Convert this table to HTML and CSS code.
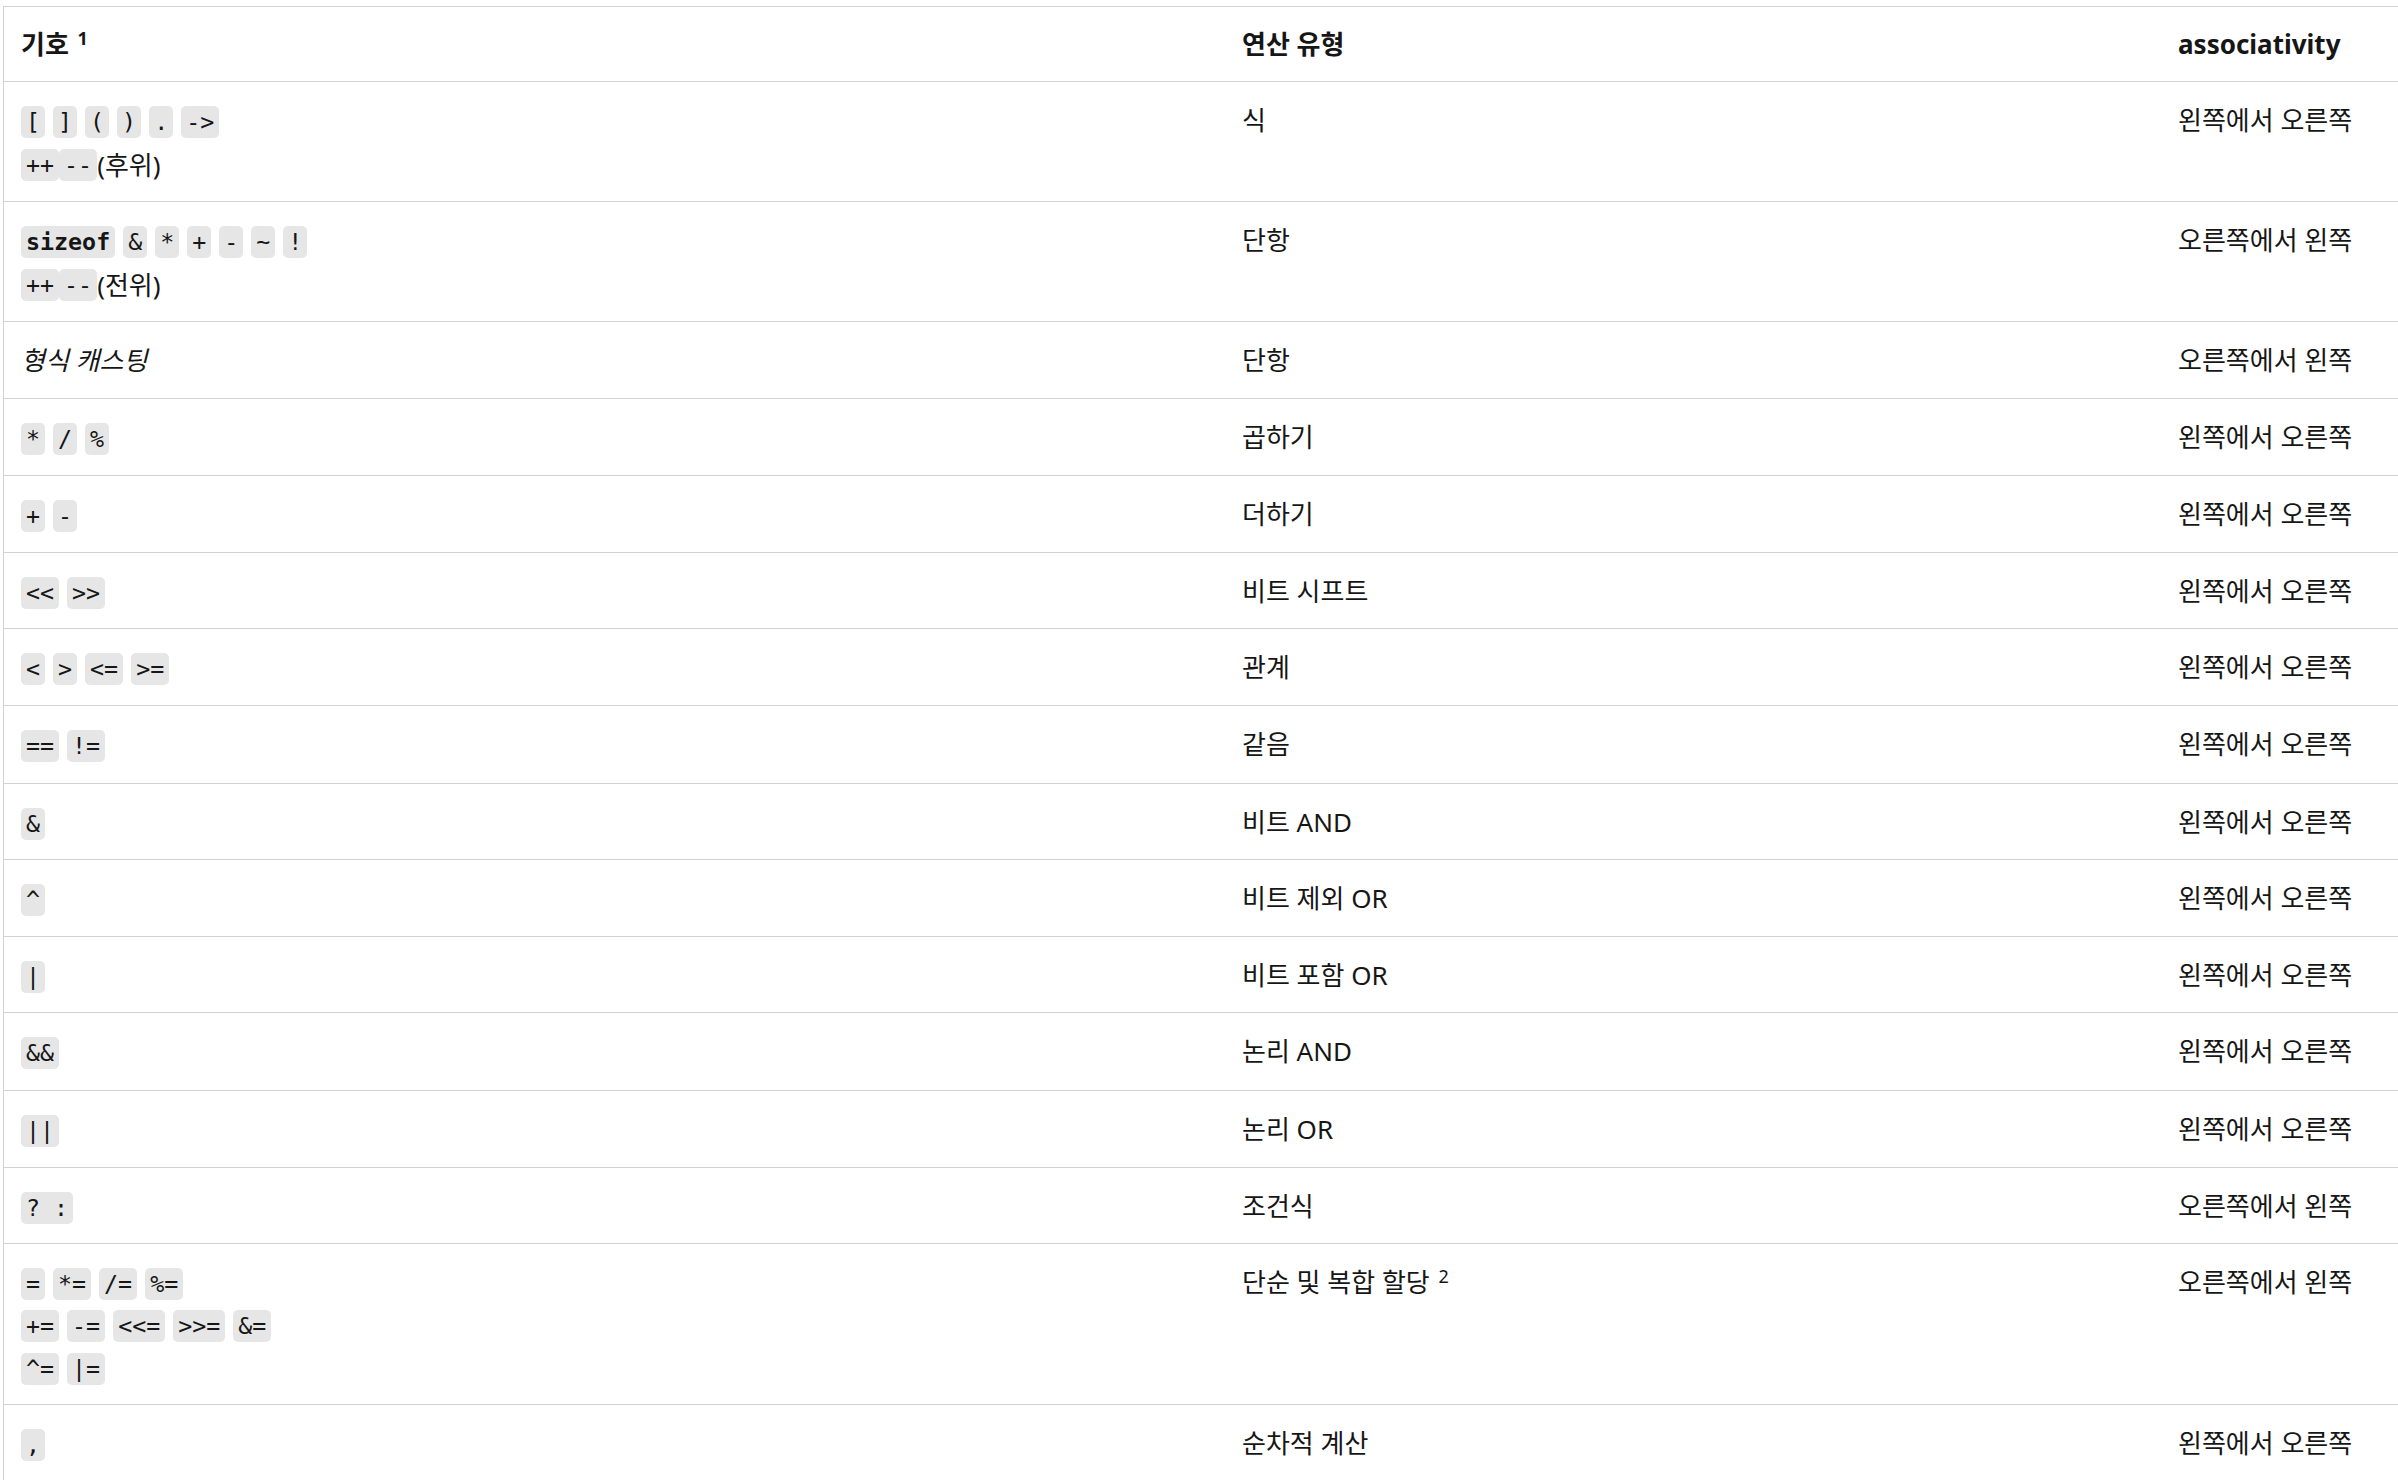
FILE: index.html
```html
<!DOCTYPE html>
<html lang="ko">
<head>
<meta charset="utf-8">
<title>C 연산자 우선 순위</title>
<link rel="stylesheet" href="styles.css">
</head>
<body>
<table class="ops">
  <colgroup><col class="c1"><col class="c2"><col class="c3"></colgroup>
  <thead>
    <tr><th class="first">기호 <sup>1</sup></th><th>연산 유형</th><th>associativity</th></tr>
  </thead>
  <tbody>
    <tr>
      <td class="first">
        <div class="ln"><code>[</code><code>]</code><code>(</code><code>)</code><code>.</code><code>-&gt;</code></div>
        <div class="ln tight"><code>++</code><code>--</code><span class="txt">(후위)</span></div>
      </td>
      <td>식</td><td>왼쪽에서 오른쪽</td>
    </tr>
    <tr>
      <td class="first">
        <div class="ln"><code class="b">sizeof</code><code>&amp;</code><code>*</code><code>+</code><code>-</code><code>~</code><code>!</code></div>
        <div class="ln tight"><code>++</code><code>--</code><span class="txt">(전위)</span></div>
      </td>
      <td>단항</td><td>오른쪽에서 왼쪽</td>
    </tr>
    <tr><td class="first"><em>형식 캐스팅</em></td><td>단항</td><td>오른쪽에서 왼쪽</td></tr>
    <tr><td class="first"><div class="ln"><code>*</code><code>/</code><code>%</code></div></td><td>곱하기</td><td>왼쪽에서 오른쪽</td></tr>
    <tr><td class="first"><div class="ln"><code>+</code><code>-</code></div></td><td>더하기</td><td>왼쪽에서 오른쪽</td></tr>
    <tr><td class="first"><div class="ln"><code>&lt;&lt;</code><code>&gt;&gt;</code></div></td><td>비트 시프트</td><td>왼쪽에서 오른쪽</td></tr>
    <tr><td class="first"><div class="ln"><code>&lt;</code><code>&gt;</code><code>&lt;=</code><code>&gt;=</code></div></td><td>관계</td><td>왼쪽에서 오른쪽</td></tr>
    <tr><td class="first"><div class="ln"><code>==</code><code>!=</code></div></td><td>같음</td><td>왼쪽에서 오른쪽</td></tr>
    <tr><td class="first"><div class="ln"><code>&amp;</code></div></td><td>비트 AND</td><td>왼쪽에서 오른쪽</td></tr>
    <tr><td class="first"><div class="ln"><code>^</code></div></td><td>비트 제외 OR</td><td>왼쪽에서 오른쪽</td></tr>
    <tr><td class="first"><div class="ln"><code>|</code></div></td><td>비트 포함 OR</td><td>왼쪽에서 오른쪽</td></tr>
    <tr><td class="first"><div class="ln"><code>&amp;&amp;</code></div></td><td>논리 AND</td><td>왼쪽에서 오른쪽</td></tr>
    <tr><td class="first"><div class="ln"><code>||</code></div></td><td>논리 OR</td><td>왼쪽에서 오른쪽</td></tr>
    <tr><td class="first"><div class="ln"><code>? :</code></div></td><td>조건식</td><td>오른쪽에서 왼쪽</td></tr>
    <tr>
      <td class="first">
        <div class="ln"><code>=</code><code>*=</code><code>/=</code><code>%=</code></div>
        <div class="ln"><code>+=</code><code>-=</code><code>&lt;&lt;=</code><code>&gt;&gt;=</code><code>&amp;=</code></div>
        <div class="ln"><code>^=</code><code>|=</code></div>
      </td>
      <td>단순 및 복합 할당 <sup>2</sup></td><td>오른쪽에서 왼쪽</td>
    </tr>
    <tr><td class="first"><div class="ln"><code>,</code></div></td><td>순차적 계산</td><td>왼쪽에서 오른쪽</td></tr>
  </tbody>
</table>
</body>
</html>
```

FILE: styles.css
```css
html, body {
  margin: 0;
  padding: 0;
  overflow: hidden;
  background: #ffffff;
}

body {
  font-family: "Noto Sans", "Noto Sans CJK KR", sans-serif;
  font-size: 26px;
  line-height: 36px;
  color: #161616;
}

.ops {
  margin: 6px 0 0 3px;
  width: 2395px;
  table-layout: fixed;
  border-collapse: separate;
  border-spacing: 0;
}

.c1 { width: 1222px; }
.c2 { width: 936px; }
.c3 { width: 237px; }

.ops th,
.ops td {
  text-align: left;
  vertical-align: top;
  padding: 20px 17px 19.6px 17px;
  border-bottom: 1.5px solid #d2d2d2;
}

.ops tbody tr:nth-child(4n) td {
  padding-bottom: 20.6px;
}

.ops th {
  font-weight: 700;
  padding-top: 19px;
  padding-bottom: 19px;
  border-top: 1.5px solid #d2d2d2;
}

.ops .first {
  border-left: 1.5px solid #d2d2d2;
}

.ops sup {
  font-size: 18px;
  line-height: 0;
  vertical-align: 9px;
  margin-left: 2px;
}

.ops em {
  font-style: italic;
}

.ln {
  display: flex;
  align-items: flex-start;
  gap: 8px;
  height: 36px;
}

.ln + .ln {
  margin-top: 6.4px;
}

.ln + .ln.tight {
  margin-top: 7.4px;
}

.ln.tight {
  gap: 0;
}

.ln code {
  display: block;
  margin-top: 4px;
  height: 32px;
  padding: 0 5px;
  border-radius: 5px;
  background: #e6e6e6;
  font-family: "DejaVu Sans Mono", "Liberation Mono", monospace;
  font-size: 23.3px;
  line-height: 32px;
  color: #161616;
  white-space: pre;
}

.ln code.b {
  font-weight: 700;
}

.ln .txt {
  display: block;
  margin-top: 2px;
}
```
